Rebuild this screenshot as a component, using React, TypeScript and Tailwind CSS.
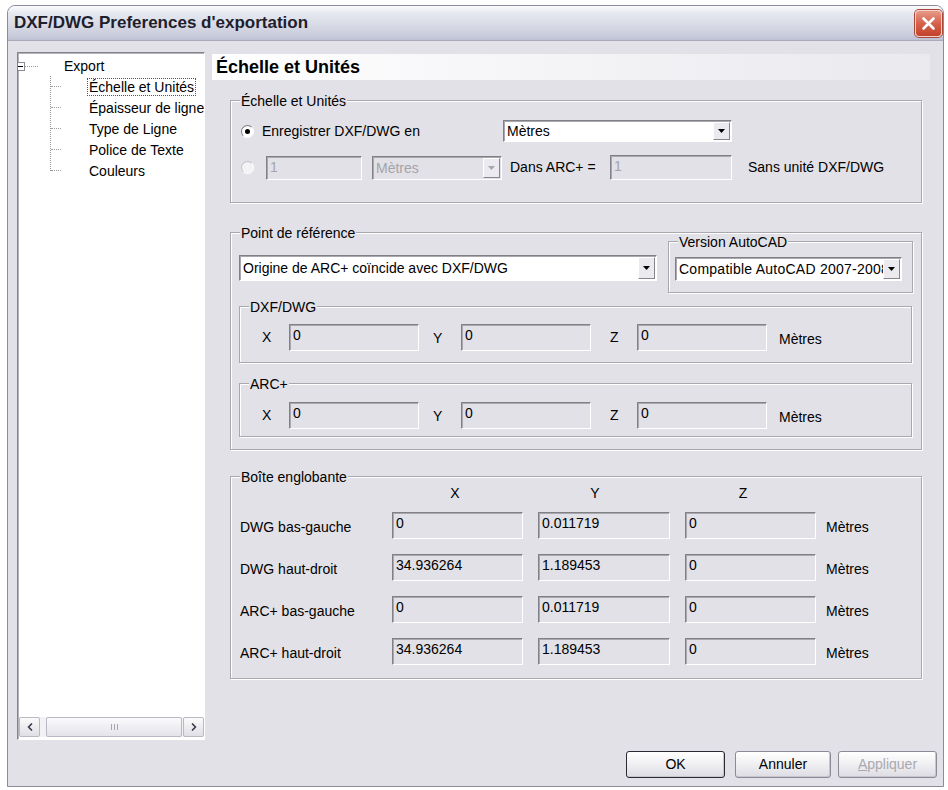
import { ChevronLeft, ChevronRight } from "lucide-react";

const BG = "bg-[#e2e1e7]";

const Arrow = ({ dim = false }: { dim?: boolean }) => (
    <svg width="7" height="4" viewBox="0 0 7 4">
        <path d="M0 0h7L3.5 4z" fill={dim ? "#a6a6ab" : "#000"} />
    </svg>
);

// sunken text field (read-only look)
const Field = ({ value, className = "", dim = false }: { value: string; className?: string; dim?: boolean }) => (
    <div
        className={`flex shrink-0 overflow-hidden whitespace-nowrap border border-t-[#808086] border-l-[#808086] border-r-white border-b-white pl-[3px] pt-[1px] leading-[18px] shadow-[inset_1px_1px_0_#a8a8ae] ${BG} ${dim ? "text-[#a4a4a9]" : "text-black"} ${className}`}
    >
        {value}
    </div>
);

const Combo = ({
    value,
    className = "",
    textClassName = "",
    disabled = false,
}: {
    value: string;
    className?: string;
    textClassName?: string;
    disabled?: boolean;
}) => (
    <div
        className={`flex shrink-0 items-stretch border border-t-[#808086] border-l-[#808086] border-r-white border-b-white p-[1px] shadow-[inset_1px_1px_0_#a8a8ae] ${disabled ? "bg-[#e2e1e7] text-[#a4a4a9]" : "bg-white text-black"} ${className}`}
    >
        <span className={`flex-1 self-center overflow-hidden whitespace-nowrap pl-[2px] leading-[18px] ${textClassName}`}>{value}</span>
        <span className="flex w-[17px] shrink-0 items-center justify-center border border-t-white border-l-white border-r-[#86868d] border-b-[#86868d] bg-[#ebeaef]">
            <Arrow dim={disabled} />
        </span>
    </div>
);

const Radio = ({ checked = false, disabled = false }: { checked?: boolean; disabled?: boolean }) => (
    <span
        className={`flex h-[13px] w-[13px] shrink-0 items-center justify-center rounded-full border ${disabled ? "border-t-[#c4c3c9] border-l-[#c4c3c9] border-r-white border-b-white bg-[#f3f3f5]" : "border-t-[#7c7c82] border-l-[#7c7c82] border-r-white border-b-white bg-white"}`}
    >
        {checked && <span className="h-[5px] w-[5px] rounded-full bg-black" />}
    </span>
);

const Group = ({ title, className = "", children }: { title: string; className?: string; children?: React.ReactNode }) => (
    <div className={`relative shrink-0 border border-[#a9a8ae] shadow-[1px_1px_0_#ffffff,inset_1px_1px_0_#ffffff] ${className}`}>
        <span className={`absolute left-[9px] top-[-8px] whitespace-nowrap px-[1px] leading-[16px] ${BG}`}>{title}</span>
        {children}
    </div>
);

const Btn = ({ label, className = "", primary = false, disabled = false }: { label: React.ReactNode; className?: string; primary?: boolean; disabled?: boolean }) => (
    <div
        className={`flex h-[27px] items-center justify-center rounded-[3px] border bg-[linear-gradient(180deg,#ffffff_0%,#f1f1f4_45%,#dcdce3_100%)] shadow-[inset_-1px_-1px_0_#c6c6ce] ${primary ? "border-[#2b2b33]" : "border-[#8b8b97]"} ${disabled ? "text-[#a9a9af]" : "text-black"} ${className}`}
    >
        {label}
    </div>
);

const treeItems = ["Échelle et Unités", "Épaisseur de ligne", "Type de Ligne", "Police de Texte", "Couleurs"];

const Tree = () => (
    <div className="flex h-[688px] w-[188px] shrink-0 flex-col overflow-hidden border border-t-[#828288] border-l-[#828288] border-r-white border-b-white bg-white shadow-[inset_1px_1px_0_#b4b4ba]">
        <div className="pt-[3px] pl-[1px]">
            <div className="flex h-[20px] items-center">
                <span className="ml-[-3px] flex h-[9px] w-[9px] shrink-0 items-center justify-center border border-[#8c8c94] bg-white">
                    <span className="h-[1px] w-[5px] bg-black" />
                </span>
                <span className="w-[13px] border-t border-dotted border-[#9a9a9a]" />
                <span className="ml-[26px]">Export</span>
            </div>
            <div className="relative">
                <span className="absolute left-[31px] top-0 h-[95px] border-l border-dotted border-[#9a9a9a]" />
                {treeItems.map((t, i) => (
                    <div key={t} className="flex h-[21px] items-center whitespace-nowrap pl-[32px]">
                        <span className="w-[10px] shrink-0 border-t border-dotted border-[#9a9a9a]" />
                        <span
                            className={`ml-[26px] shrink-0 border px-[1px] leading-[16px] ${i === 0 ? "border-dotted border-[#55555a]" : "border-transparent"}`}
                        >
                            {t}
                        </span>
                    </div>
                ))}
            </div>
        </div>

        {/* horizontal scrollbar */}
        <div className="mt-auto mb-[2px] ml-[1px] flex h-[20px] items-stretch bg-[#f2f2f4]">
            <span className="flex w-[21px] items-center justify-center rounded-[2px] border border-[#b9b9c4] bg-[linear-gradient(180deg,#fbfbfc,#dfdfe6)]">
                <ChevronLeft size={12} strokeWidth={3.5} className="text-[#3c3c4a]" />
            </span>
            <span className="ml-[6px] flex w-[136px] items-center justify-center rounded-[2px] border border-[#b9b9c4] bg-[linear-gradient(180deg,#fbfbfc,#e3e3ea)]">
                <span className="flex gap-[2px]">
                    <span className="h-[6px] w-[1px] bg-[#a6a6b0]" />
                    <span className="h-[6px] w-[1px] bg-[#a6a6b0]" />
                    <span className="h-[6px] w-[1px] bg-[#a6a6b0]" />
                </span>
            </span>
            <span className="ml-[1px] flex w-[21px] items-center justify-center rounded-[2px] border border-[#b9b9c4] bg-[linear-gradient(180deg,#fbfbfc,#dfdfe6)]">
                <ChevronRight size={12} strokeWidth={3.5} className="text-[#3c3c4a]" />
            </span>
        </div>
    </div>
);

const XYZRow = () => (
    <div className="flex items-center">
        <span className="w-[49px] shrink-0 pl-[22px]">X</span>
        <Field value="0" className="h-[27px] w-[130px]" />
        <span className="w-[42px] shrink-0 pl-[14px] pt-[2px]">Y</span>
        <Field value="0" className="h-[27px] w-[130px]" />
        <span className="w-[46px] shrink-0 pl-[19px]">Z</span>
        <Field value="0" className="h-[27px] w-[130px]" />
        <span className="ml-[12px] pt-[3px]">Mètres</span>
    </div>
);

const bboxRows = [
    { label: "DWG bas-gauche", x: "0", y: "0.011719" },
    { label: "DWG haut-droit", x: "34.936264", y: "1.189453" },
    { label: "ARC+ bas-gauche", x: "0", y: "0.011719" },
    { label: "ARC+ haut-droit", x: "34.936264", y: "1.189453" },
];

export default function App() {
    return (
        <div className="h-[790px] w-[948px] overflow-hidden bg-white pt-[5px] pl-[7px] font-['Liberation_Sans',Arial,sans-serif] text-[14px] text-black">
            <div className={`flex h-[782px] w-[937px] flex-col overflow-hidden rounded-t-[8px] border border-[#8a8c9c] ${BG}`}>
                {/* title bar */}
                <div className="flex h-[35px] shrink-0 items-center justify-between border-b border-[#a9abbb] bg-[linear-gradient(180deg,#fbfbfd_0%,#e6e8f0_22%,#d6d8e4_60%,#c8cbda_88%,#bec1d2_100%)] pl-[6px] pr-[1px]">
                    <span className="text-[17px] font-bold text-[#1e1e2c]">DXF/DWG Preferences d'exportation</span>
                    <span className="flex h-[27px] w-[27px] items-center justify-center rounded-[4px] border border-[#f4d2cb] bg-[linear-gradient(180deg,#e79a89_0%,#d7614b_50%,#c2412b_100%)] shadow-[0_0_0_1px_#a8483a]">
                        <svg width="15" height="15" viewBox="0 0 15 15">
                            <path d="M2.5 2.5l10 10M12.5 2.5l-10 10" stroke="#fff" strokeWidth="2.6" strokeLinecap="round" />
                        </svg>
                    </span>
                </div>

                {/* body */}
                <div className="flex flex-1 flex-col pt-[11px] pl-[9px] pr-[6px]">
                    <div className="flex h-[688px] gap-[7px]">
                        <Tree />

                        <div className="flex w-[718px] flex-col">
                            <div className="mt-[2px] flex h-[26px] items-center bg-[linear-gradient(90deg,#ffffff_0%,#f7f7f9_35%,#e9e9ee_100%)] pl-[4px] text-[18px] font-bold">
                                Échelle et Unités
                            </div>

                            {/* Échelle et Unités */}
                            <Group title="Échelle et Unités" className="mt-[20px] ml-[18px] h-[103px] w-[692px]">
                                <div className="flex flex-col pt-[19px] pl-[10px]">
                                    <div className="flex h-[22px] items-center">
                                        <Radio checked />
                                        <span className="ml-[8px] w-[241px] shrink-0">Enregistrer DXF/DWG en</span>
                                        <Combo value="Mètres" className="h-[22px] w-[229px]" />
                                    </div>
                                    <div className="mt-[13px] flex h-[25px] items-center">
                                        <Radio disabled />
                                        <Field value="1" dim className="ml-[12px] h-[24px] w-[96px]" />
                                        <Combo value="Mètres" disabled className="ml-[10px] h-[24px] w-[130px]" />
                                        <span className="ml-[8px] w-[100px] shrink-0">Dans ARC+ =</span>
                                        <Field value="1" dim className="h-[25px] w-[122px]" />
                                        <span className="ml-[16px]">Sans unité DXF/DWG</span>
                                    </div>
                                </div>
                            </Group>

                            {/* Point de référence */}
                            <Group title="Point de référence" className="mt-[29px] ml-[18px] h-[218px] w-[692px]">
                                <div className="flex flex-col pt-[8px] pl-[8px]">
                                    <div className="flex items-start">
                                        <Combo value="Origine de ARC+ coïncide avec DXF/DWG" className="mt-[14px] h-[26px] w-[418px]" />
                                        <Group title="Version AutoCAD" className="ml-[11px] h-[52px] w-[245px]">
                                            <div className="pt-[15px] pl-[6px]">
                                                <Combo
                                                    value="Compatible AutoCAD 2007-2008"
                                                    textClassName="tracking-[0.25px]"
                                                    className="h-[24px] w-[227px]"
                                                />
                                            </div>
                                        </Group>
                                    </div>
                                    <Group title="DXF/DWG" className="mt-[13px] h-[57px] w-[673px]">
                                        <div className="pt-[17px]">
                                            <XYZRow />
                                        </div>
                                    </Group>
                                    <Group title="ARC+" className="mt-[20px] h-[54px] w-[673px]">
                                        <div className="pt-[18px]">
                                            <XYZRow />
                                        </div>
                                    </Group>
                                </div>
                            </Group>

                            {/* Boîte englobante */}
                            <Group title="Boîte englobante" className="mt-[26px] ml-[18px] h-[203px] w-[692px]">
                                <div className="pt-[7px]">
                                    <div className="flex h-[18px] items-center">
                                        <span className="w-[161px] shrink-0" />
                                        <span className="w-[126px] shrink-0 text-center">X</span>
                                        <span className="ml-[15px] w-[124px] shrink-0 text-center">Y</span>
                                        <span className="ml-[23px] w-[126px] shrink-0 text-center">Z</span>
                                    </div>
                                    <div className="mt-[10px] flex flex-col gap-[15px]">
                                        {bboxRows.map((r) => (
                                            <div key={r.label} className="flex h-[27px] items-center">
                                                <span className="w-[161px] shrink-0 pl-[9px] pt-[4px]">{r.label}</span>
                                                <Field value={r.x} className="h-[27px] w-[131px]" />
                                                <Field value={r.y} className="ml-[15px] h-[27px] w-[132px]" />
                                                <Field value="0" className="ml-[15px] h-[27px] w-[131px]" />
                                                <span className="ml-[10px] pt-[3px]">Mètres</span>
                                            </div>
                                        ))}
                                    </div>
                                </div>
                            </Group>
                        </div>
                    </div>

                    {/* buttons */}
                    <div className="mt-[11px] flex justify-end">
                        <Btn label="OK" primary className="w-[99px]" />
                        <Btn label="Annuler" className="ml-[10px] w-[96px]" />
                        <Btn
                            label={
                                <span>
                                    <span className="underline">A</span>ppliquer
                                </span>
                            }
                            disabled
                            className="ml-[7px] w-[99px]"
                        />
                    </div>
                </div>
            </div>
        </div>
    );
}
